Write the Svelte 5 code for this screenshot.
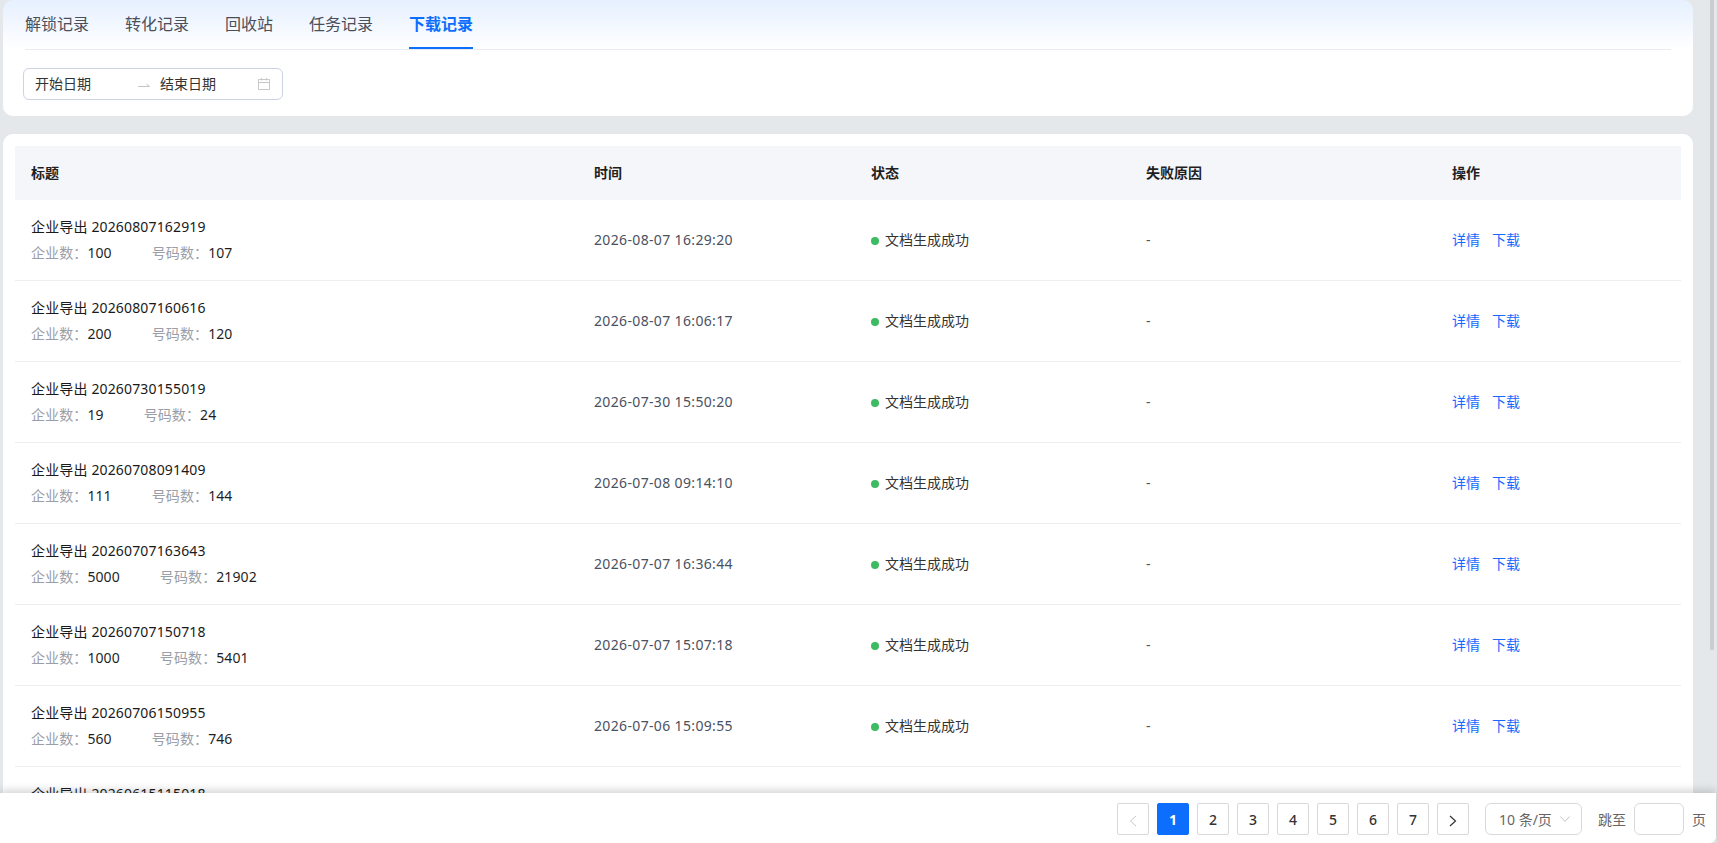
<script>
  const tabs = ['解锁记录', '转化记录', '回收站', '任务记录', '下载记录'];
  const activeTab = '下载记录';

  const rows = [
    { title: '企业导出 20260807162919', companies: 100, phones: 107, time: '2026-08-07 16:29:20' },
    { title: '企业导出 20260807160616', companies: 200, phones: 120, time: '2026-08-07 16:06:17' },
    { title: '企业导出 20260730155019', companies: 19, phones: 24, time: '2026-07-30 15:50:20' },
    { title: '企业导出 20260708091409', companies: 111, phones: 144, time: '2026-07-08 09:14:10' },
    { title: '企业导出 20260707163643', companies: 5000, phones: 21902, time: '2026-07-07 16:36:44' },
    { title: '企业导出 20260707150718', companies: 1000, phones: 5401, time: '2026-07-07 15:07:18' },
    { title: '企业导出 20260706150955', companies: 560, phones: 746, time: '2026-07-06 15:09:55' },
    { title: '企业导出 20260615115018', companies: 100, phones: 100, time: '2026-06-15 11:50:18' }
  ];

  const pages = [1, 2, 3, 4, 5, 6, 7];
  let current = 1;
</script>

<div class="page">
  <div class="scroll-thumb"></div>

  <main class="content">
    <section class="card filters">
      <nav class="tabs">
        {#each tabs as tab}
          <span class="tab" class:active={tab === activeTab}>{tab}</span>
        {/each}
      </nav>
      <div class="range">
        <span class="range-text">开始日期</span>
        <svg class="range-arrow" viewBox="0 0 12 6" width="12" height="6">
          <path d="M0 4.5H11.5L8.5 2" fill="none" stroke="#c4c4c4" stroke-width="1" />
        </svg>
        <span class="range-text">结束日期</span>
        <svg class="range-cal" viewBox="0 0 12 12" width="12" height="12">
          <path d="M.5 1.5h11v10H.5zM.5 4.5h11M3.5 0v2.5M8.5 0v2.5" fill="none" stroke="#c8c8c8" stroke-width="1" />
        </svg>
      </div>
    </section>

    <section class="card list">
      <table>
        <colgroup>
          <col style="width:563px" />
          <col style="width:277px" />
          <col style="width:275px" />
          <col style="width:306px" />
          <col />
        </colgroup>
        <thead>
          <tr>
            <th>标题</th>
            <th>时间</th>
            <th>状态</th>
            <th>失败原因</th>
            <th>操作</th>
          </tr>
        </thead>
        <tbody>
          {#each rows as row}
            <tr>
              <td>
                <div class="title">{row.title}</div>
                <div class="counts">
                  <span><i>企业数：</i>{row.companies}</span>
                  <span><i>号码数：</i>{row.phones}</span>
                </div>
              </td>
              <td class="lift time">{row.time}</td>
              <td class="lift">
                <span class="status"><b class="dot"></b>文档生成成功</span>
              </td>
              <td class="lift reason">-</td>
              <td class="lift">
                <span class="ops"><a href="#detail">详情</a><a href="#download">下载</a></span>
              </td>
            </tr>
          {/each}
        </tbody>
      </table>
    </section>
  </main>

  <footer class="pager">
    <span class="pg disabled">
      <svg viewBox="0 0 8 12" width="8" height="12"><path d="M7 1L1.5 6l5.5 5" fill="none" stroke="#c8c8c8" stroke-width="1" /></svg>
    </span>
    {#each pages as p}
      <span class="pg" class:on={p === current}>{p}</span>
    {/each}
    <span class="pg">
      <svg viewBox="0 0 8 12" width="8" height="12"><path d="M1 1l5.5 5L1 11" fill="none" stroke="#333" stroke-width="1.2" /></svg>
    </span>
    <span class="size">
      10 条/页
      <svg viewBox="0 0 10 6" width="10" height="6"><path d="M.5.5L5 5.5 9.5.5" fill="none" stroke="#c4c4c4" stroke-width="1" /></svg>
    </span>
    <span class="jump">跳至</span>
    <span class="jump-input"></span>
    <span class="jump last">页</span>
  </footer>
</div>

<style>
  :global(body) {
    background: #e5e8eb;
    overflow: hidden;
  }

  .page {
    position: relative;
    display: flex;
    flex-direction: column;
    height: 100vh;
    overflow: hidden;
    font-family: "Noto Sans", "Noto Sans CJK SC", sans-serif;
    font-size: 14px;
    color: #1f1f1f;
  }

  .scroll-thumb {
    position: absolute;
    top: 0;
    left: 1710px;
    width: 4px;
    height: 650px;
    background: #cbcdd0;
  }

  .content {
    flex: 1;
    min-height: 0;
    overflow: hidden;
    padding: 0 24px 0 3px;
  }

  .card {
    background: #fff;
    border-radius: 10px;
  }

  .filters {
    height: 116px;
    box-sizing: border-box;
    padding: 0 22px;
    background: linear-gradient(180deg, #e6f0ff 0, #ffffff 50px);
  }

  .tabs {
    display: flex;
    gap: 36px;
    height: 50px;
    box-sizing: border-box;
    border-bottom: 1px solid #e8ecf0;
  }

  .tab {
    height: 49px;
    box-sizing: border-box;
    padding-top: 13px;
    line-height: 22px;
    font-size: 16px;
    color: #4a4f5a;
  }

  .tab.active {
    color: #0d6efd;
    font-weight: 600;
    border-bottom: 2px solid #0d6efd;
  }

  .range {
    display: flex;
    align-items: center;
    width: 260px;
    height: 32px;
    box-sizing: border-box;
    margin: 18px 0 0 -2px;
    padding: 0 12px 0 11px;
    border: 1px solid #ccd3e3;
    border-radius: 6px;
  }

  .range-text {
    width: 56px;
    line-height: 22px;
    color: #333;
  }

  .range-arrow {
    margin: 2px 10px 0 47px;
  }

  .range-cal {
    margin-left: auto;
  }

  .list {
    margin-top: 18px;
    padding: 12px 12px 0;
  }

  table {
    width: 1666px;
    table-layout: fixed;
    border-collapse: collapse;
  }

  th {
    height: 52px;
    padding: 0 16px 2px;
    background: #f5f6fa;
    text-align: left;
    font-weight: 600;
    color: #1f1f1f;
  }

  td {
    height: 80px;
    padding: 0 16px;
    border-bottom: 1px solid #eceef1;
    vertical-align: middle;
  }

  td.lift {
    height: 78px;
    padding-bottom: 2px;
  }

  .title {
    line-height: 22px;
    letter-spacing: 0.15px;
    color: #1a1a1a;
  }

  .counts {
    display: flex;
    gap: 40px;
    margin-top: 4px;
    line-height: 22px;
    letter-spacing: 0.1px;
  }

  .counts i {
    font-style: normal;
    color: #9a9ea8;
  }

  .time {
    letter-spacing: 0.35px;
    color: #4a5160;
  }

  .status {
    display: flex;
    align-items: center;
    gap: 6px;
    color: #333;
  }

  .dot {
    width: 8px;
    height: 8px;
    margin-top: 4px;
    border-radius: 50%;
    background: #3dbb62;
  }

  .reason {
    color: #555;
  }

  .ops {
    display: flex;
    gap: 12px;
  }

  .ops a {
    color: #1769ff;
    text-decoration: none;
  }

  .pager {
    position: relative;
    display: flex;
    flex: none;
    align-items: center;
    justify-content: flex-end;
    gap: 8px;
    height: 50px;
    margin-right: 1px;
    padding-right: 10px;
    padding-top: 2px;
    box-sizing: border-box;
    background: #fff;
    border-bottom-right-radius: 6px;
    box-shadow: 0 -2px 10px rgba(0, 0, 0, 0.2);
  }

  .pg {
    display: flex;
    align-items: center;
    justify-content: center;
    width: 32px;
    height: 32px;
    box-sizing: border-box;
    border: 1px solid #d9d9d9;
    border-radius: 2px;
    font-weight: 500;
    color: #333;
  }

  .pg svg {
    margin-top: 4px;
  }

  .pg.on {
    background: #0d6efd;
    border-color: #0d6efd;
    color: #fff;
    font-weight: 700;
  }

  .size {
    display: flex;
    align-items: center;
    justify-content: space-between;
    width: 97px;
    height: 32px;
    box-sizing: border-box;
    margin-left: 8px;
    padding: 0 11px 0 13px;
    border: 1px solid #d9d9d9;
    border-radius: 6px;
    color: #666;
  }

  .jump {
    margin-left: 8px;
    color: #666;
  }

  .jump.last {
    margin-left: 0;
  }

  .jump-input {
    width: 50px;
    height: 32px;
    box-sizing: border-box;
    border: 1px solid #d9d9d9;
    border-radius: 6px;
  }
</style>
